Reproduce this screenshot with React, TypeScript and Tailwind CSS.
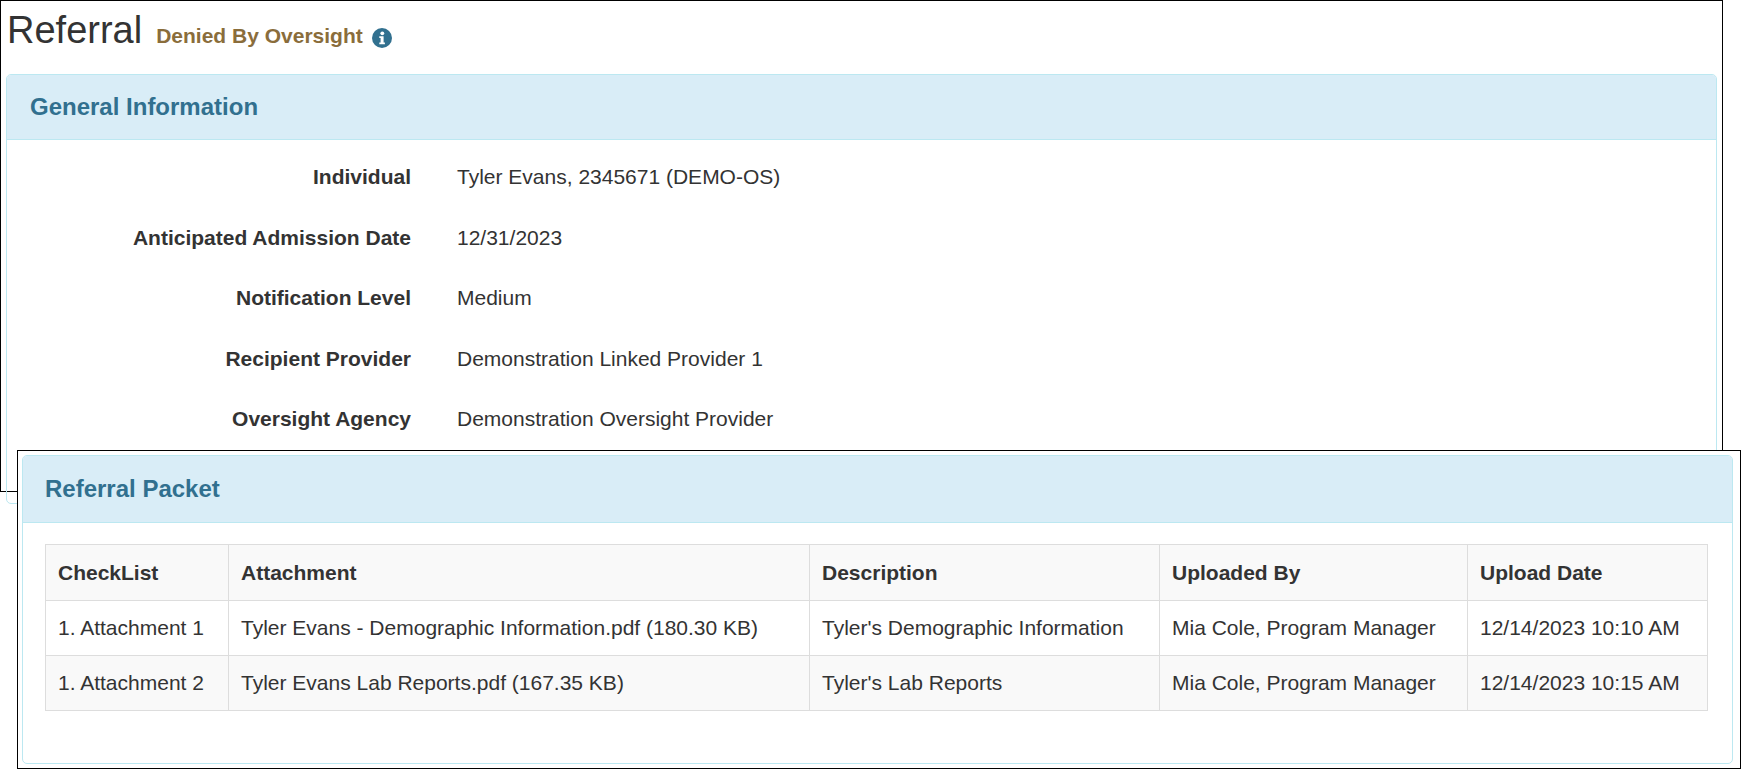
import React from "react";

const rows = [
  ["Individual", "Tyler Evans, 2345671 (DEMO-OS)"],
  ["Anticipated Admission Date", "12/31/2023"],
  ["Notification Level", "Medium"],
  ["Recipient Provider", "Demonstration Linked Provider 1"],
  ["Oversight Agency", "Demonstration Oversight Provider"],
];

const trows = [
  ["1. Attachment 1", "Tyler Evans - Demographic Information.pdf (180.30 KB)", "Tyler's Demographic Information", "Mia Cole, Program Manager", "12/14/2023 10:10 AM"],
  ["1. Attachment 2", "Tyler Evans Lab Reports.pdf (167.35 KB)", "Tyler's Lab Reports", "Mia Cole, Program Manager", "12/14/2023 10:15 AM"],
];

export default function App() {
  return (
    <div className="relative w-[1750px] h-[771px] bg-white text-[#333] overflow-hidden" style={{ fontFamily: '"Liberation Sans", Arial, sans-serif' }}>
      <div className="absolute left-0 top-0 w-[1723px] h-[492px] border border-black bg-white">
        <div className="flex items-baseline h-[72px] pl-[6px] pt-[4px]">
          <span className="text-[38px] leading-[50px]">Referral</span>
          <span className="ml-[14px] text-[21px] font-bold text-[#8a6d3b]">Denied By Oversight</span>
          <svg className="ml-[9px] self-center -mt-[2px]" width="20" height="20" viewBox="0 0 20 20">
            <circle cx="10" cy="10" r="10" fill="#31708f" />
            <circle cx="10.3" cy="5.3" r="1.9" fill="#fff" />
            <path d="M7.3 8.2h4.3v6.3h1.3v1.8H7.3v-1.8h1.3v-4.5H7.3z" fill="#fff" />
          </svg>
        </div>
        <div className="ml-[5px] mt-[1px] w-[1711px] h-[430px] border border-[#bce8f1] rounded-[5px] overflow-hidden">
          <div className="h-[65px] bg-[#d9edf7] border-b border-[#bce8f1] flex items-center px-[23px]">
            <span className="text-[24px] font-bold text-[#31708f]">General Information</span>
          </div>
          <div className="pt-[25px] flex flex-col">
            {rows.map(([l, v]) => (
              <div key={l} className="flex h-[60.5px] items-start text-[21px] leading-[24px]">
                <div className="w-[404px] text-right font-bold">{l}</div>
                <div className="ml-[46px]">{v}</div>
              </div>
            ))}
          </div>
        </div>
      </div>
      <div className="absolute left-[17px] top-[450px] w-[1724px] h-[319px] border border-black bg-white">
        <div className="ml-[4px] mt-[4px] w-[1711px] h-[309px] border border-[#bce8f1] rounded-[5px] overflow-hidden">
          <div className="h-[67px] bg-[#d9edf7] border-b border-[#bce8f1] flex items-center px-[22px]">
            <span className="text-[24px] font-bold text-[#31708f]">Referral Packet</span>
          </div>
          <div className="pl-[22px] pt-[21px]">
            <table className="border-collapse text-[21px] w-[1663px]">
              <thead>
                <tr className="bg-[#f9f9f9] h-[56px]">
                  {["CheckList", "Attachment", "Description", "Uploaded By", "Upload Date"].map((h, i) => (
                    <th key={h} className={"border border-[#ddd] text-left font-bold px-[12px] " + ["w-[183px]", "w-[581px]", "w-[350px]", "w-[308px]", ""][i]}>{h}</th>
                  ))}
                </tr>
              </thead>
              <tbody>
                {trows.map((r, ri) => (
                  <tr key={ri} className={(ri % 2 ? "bg-[#f9f9f9]" : "bg-white") + " h-[55px]"}>
                    {r.map((c, i) => (
                      <td key={i} className="border border-[#ddd] px-[12px]">{c}</td>
                    ))}
                  </tr>
                ))}
              </tbody>
            </table>
          </div>
        </div>
      </div>
    </div>
  );
}
